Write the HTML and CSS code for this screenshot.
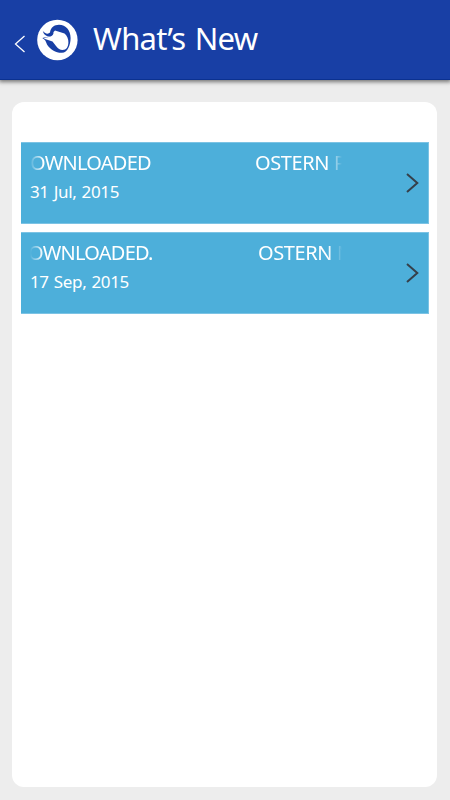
FILE: index.html
```html
<!DOCTYPE html>
<html lang="en">
<head>
  <meta charset="UTF-8" />
  <meta name="viewport" content="width=device-width, initial-scale=1" />
  <title>What’s New</title>
  <link rel="stylesheet" href="styles.css">
</head>
<body>
  <header class="topbar">
    <svg class="back" width="12" height="18" viewBox="0 0 12 18">
      <path d="M10.500 1L1.500 9L10.500 17" />
    </svg>
    <svg class="logo" width="42" height="42" viewBox="0 0 42 42">
      <circle cx="21.4" cy="21" r="20.2" fill="#fff" />
      <path d="M14 13.500C14.500 8.500 18.500 5.800 23 5.800C30 6 34.600 11.500 34.600 19C34.600 26 31.500 33.800 26 33.800C20 34 14 30.500 11 25.500C10 22.500 9 20.300 6.300 19C9 18.200 12.500 18.500 15 18C12 17.800 7.500 16.500 6.800 11.800C8.500 14.300 12 15.800 14 13.500Z" fill="#183fa5" />
      <path d="M17.500 13L19 11.500L28.500 14.500C31 16.500 32.600 20 32.400 23.500C32.200 28 30.500 31 26.500 31C24 31 22 29.500 20 27L16.500 22.500L7.500 19.500L14.500 17.500Q17.800 16 17.500 13Z" fill="#fff" />
    </svg>
    <h1>What’s New</h1>
  </header>
  <main class="panel">
    <a class="item">
      <div class="text">
        <div class="marquee"><span class="first">OWNLOADED</span><span>OSTERN P</span></div>
        <div class="date">31 Jul, 2015</div>
      </div>
      <svg class="arrow" width="13" height="20" viewBox="0 0 13 20">
        <path d="M1 1L11.300 10L1 19" />
      </svg>
    </a>
    <a class="item second">
      <div class="text">
        <div class="marquee"><span class="first">OWNLOADED.</span><span>OSTERN N</span></div>
        <div class="date">17 Sep, 2015</div>
      </div>
      <svg class="arrow" width="13" height="20" viewBox="0 0 13 20">
        <path d="M1 1L11.300 10L1 19" />
      </svg>
    </a>
  </main>
</body>
</html>
```

FILE: styles.css
```css
* {
  box-sizing: border-box;
}

body {
  margin: 0;
  height: 100vh;
  overflow: hidden;
  background: #ededed;
  font-family: 'Noto Sans', 'Open Sans', sans-serif;
  color: #fff;
}

.topbar {
  display: flex;
  align-items: center;
  height: 80px;
  padding-left: 14px;
  background: #183fa5;
  border-bottom: 1px solid #0b3190;
  box-shadow: 0 1px 4px 1px rgba(0, 0, 0, 0.5);
}

.back {
  margin-top: 8px;
  fill: none;
  stroke: #fff;
  stroke-width: 1.3;
}

.logo {
  margin-left: 10px;
}

h1 {
  margin: -3px 0 0 15px;
  font-size: 31px;
  font-weight: 400;
  line-height: 42px;
  letter-spacing: -0.7px;
  word-spacing: 2px;
  white-space: nowrap;
}

.panel {
  height: 685px;
  margin: 22px 13px 0 12px;
  padding: 40px 8px 0 9px;
  background: #fff;
  border-radius: 12px;
}

.item {
  display: flex;
  justify-content: space-between;
  height: 82px;
  margin-bottom: 8px;
  padding: 8px 9px 0 9px;
  background: #4dafda;
  border: 1px solid #7cc3e4;
  border-width: 1px 1px 1px 0;
}

.text {
  width: 312px;
}

/* both ends of the scrolling title fade out */
.marquee {
  display: flex;
  height: 28px;
  font-size: 20px;
  line-height: 24px;
  letter-spacing: -0.4px;
  white-space: nowrap;
  -webkit-mask-image: linear-gradient(to right, transparent, #000 13px, #000 298px, transparent);
  mask-image: linear-gradient(to right, transparent, #000 13px, #000 298px, transparent);
}

.first {
  flex: 0 0 225px;
  letter-spacing: -0.75px;
}

.second .first {
  flex-basis: 228px;
  text-indent: -2px;
}

.date {
  margin-top: 2px;
  font-size: 17px;
  line-height: 22px;
  letter-spacing: -0.35px;
  word-spacing: 1px;
}

.arrow {
  margin-top: 22px;
  fill: none;
  stroke: #36404a;
  stroke-width: 2;
}
```
